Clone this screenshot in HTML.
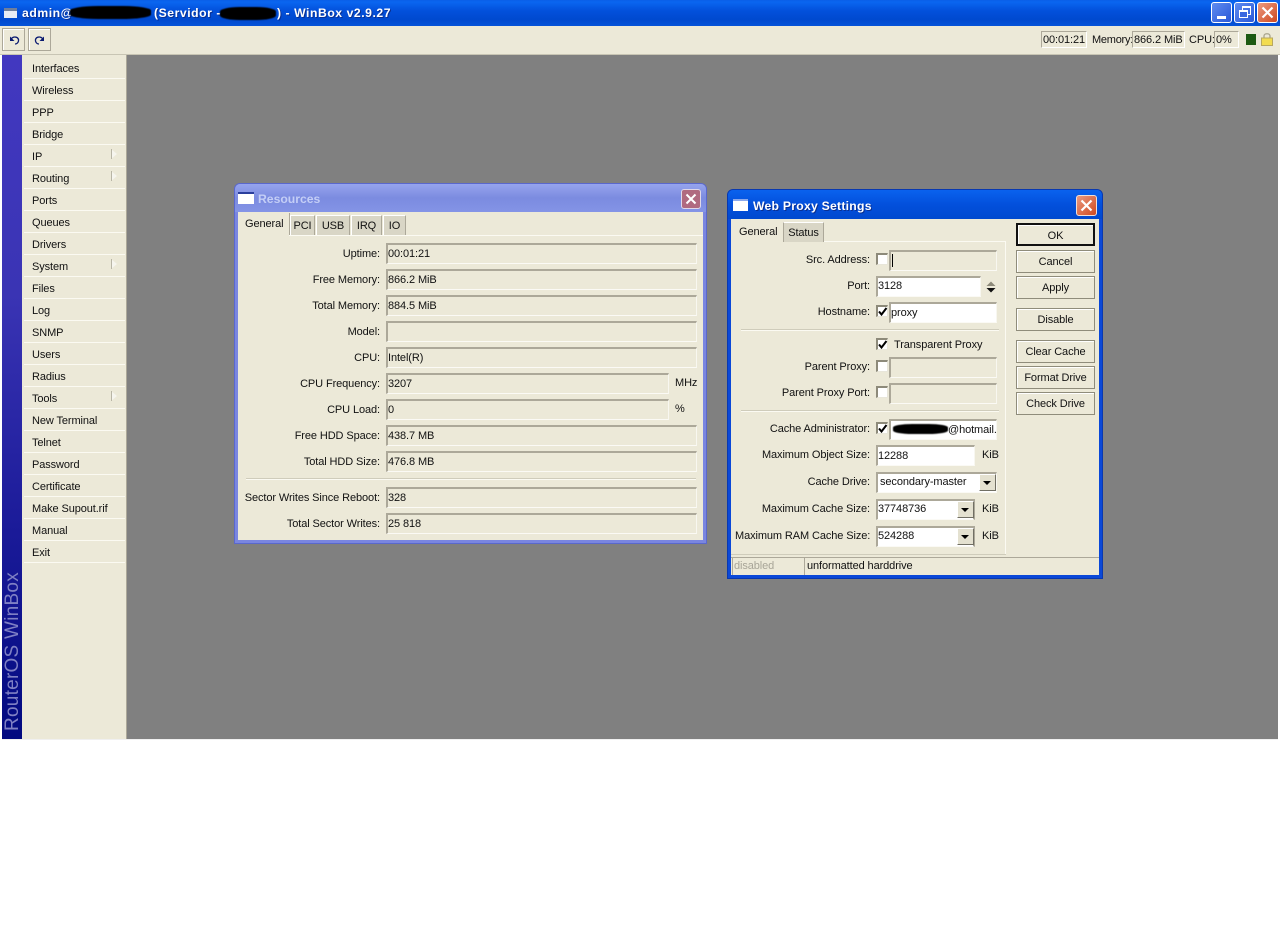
<!DOCTYPE html>
<html><head><meta charset="utf-8"><style>
html,body{margin:0;padding:0;background:#fff;width:1280px;height:929px;overflow:hidden}
*{box-sizing:border-box}
body{position:relative;font-family:"Liberation Sans",sans-serif;font-size:11px;letter-spacing:-.1px;color:#111}
div,span.a{position:absolute}
.t{white-space:nowrap;line-height:14px;height:14px}
.r{text-align:right}
.f{height:21px;border-top:2px solid #aca899;border-left:2px solid #aca899;border-right:1px solid #f8f7f0;border-bottom:1px solid #fbfaf5;background:#ece9d8;padding:2px 0 0 0;line-height:14px;white-space:nowrap;overflow:hidden}
.w{background:#fff}
.m{left:32px;width:90px}
.s{left:24px;width:101px;height:1px;background:#fbfaf2}
.arrow{left:111px;width:0;height:0;border-left:6px solid #f6f5ee;border-top:5px solid transparent;border-bottom:5px solid transparent}
.arrow:before{content:"";position:absolute;left:-6px;top:-5px;width:1px;height:10px;background:#b8b5a6}
.tab{background:#d9d6c6;height:20px;border-right:1px solid #aca899;border-top:1px solid #fff;border-left:1px solid #fff;text-align:center;line-height:20px}
.btn{left:1016px;width:79px;height:23px;border:1px solid #8f8c7b;box-shadow:inset 1px 1px 0 #fff;text-align:center;line-height:22px;background:#ece9d8}
.cb{width:12px;height:12px;background:#fff;border-top:2px solid #8d8a7a;border-left:2px solid #8d8a7a;border-right:1px solid #e8e6da;border-bottom:1px solid #e8e6da}
.dd{width:17px;height:17px;background:#e4e1d0;border-right:1px solid #716f64;border-bottom:1px solid #716f64;border-top:1px solid #fff;border-left:1px solid #fff}
.dd:after{content:"";position:absolute;left:3px;top:6px;border-left:4px solid transparent;border-right:4px solid transparent;border-top:4px solid #000}
.blot{background:#000;border-radius:35%;filter:blur(.6px)}
.tb{height:21px;width:21px;border-radius:3px;border:1px solid #fff}
.h{font-size:12.2px;font-weight:bold;letter-spacing:.45px}
</style></head><body>

<!-- main title bar -->
<div style="left:0;top:0;width:1280px;height:26px;background:linear-gradient(180deg,#0a5fe8 0,#0a66f0 8%,#0351dc 40%,#0049cf 75%,#0553d8 100%)"></div>
<div style="left:4px;top:8px;width:13px;height:10px;background:#e8ecf5;border-top:3px solid #6f7f9c"></div>
<div class="t h" style="left:22px;top:6px;color:#fff;letter-spacing:.55px;text-shadow:1px 1px 0 #0a2f90">admin@</div>
<div class="blot" style="left:70px;top:6px;width:81px;height:13px"></div>
<div class="t h" style="left:154px;top:6px;color:#fff;letter-spacing:.55px;text-shadow:1px 1px 0 #0a2f90">(Servidor -</div>
<div class="blot" style="left:220px;top:7px;width:56px;height:13px"></div>
<div class="t h" style="left:277px;top:6px;color:#fff;letter-spacing:.55px;text-shadow:1px 1px 0 #0a2f90">) - WinBox v2.9.27</div>

<div class="tb" style="left:1211px;top:2px;background:linear-gradient(135deg,#5f8cf0,#2a58d8)"><div style="left:5px;top:13px;width:9px;height:3px;background:#fff"></div></div>
<div class="tb" style="left:1234px;top:2px;background:linear-gradient(135deg,#5f8cf0,#2a58d8)"><div style="left:7px;top:3px;width:9px;height:9px;border:1px solid #fff;border-top-width:2px"></div><div style="left:4px;top:7px;width:9px;height:8px;border:1px solid #fff;border-top-width:2px;background:#3a68e0"></div></div>
<div class="tb" style="left:1257px;top:2px;background:linear-gradient(135deg,#ea9a80,#d04a20)"><svg style="position:absolute;left:3px;top:3px" width="13" height="13"><path d="M1.500 1.500L11.500 11.500M11.500 1.500L1.500 11.500" stroke="#fff" stroke-width="2.200"/></svg></div>

<!-- toolbar -->
<div style="left:0;top:26px;width:1280px;height:28px;background:#ece9d8"></div>
<div style="left:0;top:54px;width:1280px;height:1px;background:#c8c5b4"></div>
<div style="left:2px;top:28px;width:23px;height:23px;border:1px solid #aca899;box-shadow:inset 1px 1px 0 #fff"><svg style="position:absolute;left:4px;top:4px" width="14" height="14"><path d="M3 3.500L3 8L7.500 8Z" fill="#0a1a70"/><path d="M4 6C7 2.500 12 4 11.500 8C11 10 9.500 11 8 11" fill="none" stroke="#0a1a70" stroke-width="1.300"/></svg></div>
<div style="left:28px;top:28px;width:23px;height:23px;border:1px solid #aca899;box-shadow:inset 1px 1px 0 #fff"><svg style="position:absolute;left:4px;top:4px" width="14" height="14"><path d="M11 3.500L11 8L6.500 8Z" fill="#0a1a70"/><path d="M10 6C7 2.500 2 4 2.500 8C3 10 4.500 11 6 11" fill="none" stroke="#0a1a70" stroke-width="1.300"/></svg></div>

<div style="left:1041px;top:31px;width:46px;height:17px;border-top:1px solid #aca899;border-left:1px solid #aca899;border-right:1px solid #fff;border-bottom:1px solid #fff"></div>
<div class="t" style="left:1043px;top:33px">00:01:21</div>
<div class="t" style="left:1092px;top:33px;letter-spacing:-.25px">Memory:</div>
<div style="left:1132px;top:31px;width:53px;height:17px;border-top:1px solid #aca899;border-left:1px solid #aca899;border-right:1px solid #fff;border-bottom:1px solid #fff"></div>
<div class="t" style="left:1134px;top:33px">866.2 MiB</div>
<div class="t" style="left:1189px;top:33px">CPU:</div>
<div style="left:1214px;top:31px;width:25px;height:17px;border-top:1px solid #aca899;border-left:1px solid #aca899;border-right:1px solid #fff;border-bottom:1px solid #fff"></div>
<div class="t" style="left:1216px;top:33px">0%</div>
<div style="left:1246px;top:34px;width:10px;height:11px;background:#1d5a12"></div>
<svg class="a" style="position:absolute;left:1261px;top:32px" width="12" height="14"><path d="M3 6V4C3 1 9 1 9 4V6" fill="none" stroke="#a8a48c" stroke-width="1.300"/><rect x=".5" y="6" width="11" height="7.500" fill="#f2dc50" stroke="#b8a860"/></svg>

<!-- left area -->
<div style="left:0;top:55px;width:2px;height:684px;background:#fff"></div>
<div style="left:2px;top:55px;width:20px;height:684px;background:linear-gradient(180deg,#4238c0 0,#3a34b4 35%,#1a1a98 70%,#020a80 100%)"></div>
<div style="left:22px;top:55px;width:105px;height:684px;background:#ece9d8"></div>
<div style="left:127px;top:55px;width:1151px;height:684px;background:#808080"></div>
<div style="left:126px;top:55px;width:1px;height:684px;background:#aca899"></div>
<div style="left:2px;top:739px;width:1276px;height:1px;background:#f0f0f0"></div>
<div class="t" style="left:-67px;top:641px;width:160px;height:20px;line-height:20px;font-size:19px;color:#7f80c4;transform:rotate(-90deg);letter-spacing:.25px">RouterOS WinBox</div>

<div class="t m" style="top:62px">Interfaces</div><div class="s" style="top:78px"></div>
<div class="t m" style="top:84px">Wireless</div><div class="s" style="top:100px"></div>
<div class="t m" style="top:106px">PPP</div><div class="s" style="top:122px"></div>
<div class="t m" style="top:128px">Bridge</div><div class="s" style="top:144px"></div>
<div class="t m" style="top:150px">IP</div><div class="s" style="top:166px"></div><div class="arrow" style="top:149px"></div>
<div class="t m" style="top:172px">Routing</div><div class="s" style="top:188px"></div><div class="arrow" style="top:171px"></div>
<div class="t m" style="top:194px">Ports</div><div class="s" style="top:210px"></div>
<div class="t m" style="top:216px">Queues</div><div class="s" style="top:232px"></div>
<div class="t m" style="top:238px">Drivers</div><div class="s" style="top:254px"></div>
<div class="t m" style="top:260px">System</div><div class="s" style="top:276px"></div><div class="arrow" style="top:259px"></div>
<div class="t m" style="top:282px">Files</div><div class="s" style="top:298px"></div>
<div class="t m" style="top:304px">Log</div><div class="s" style="top:320px"></div>
<div class="t m" style="top:326px">SNMP</div><div class="s" style="top:342px"></div>
<div class="t m" style="top:348px">Users</div><div class="s" style="top:364px"></div>
<div class="t m" style="top:370px">Radius</div><div class="s" style="top:386px"></div>
<div class="t m" style="top:392px">Tools</div><div class="s" style="top:408px"></div><div class="arrow" style="top:391px"></div>
<div class="t m" style="top:414px">New Terminal</div><div class="s" style="top:430px"></div>
<div class="t m" style="top:436px">Telnet</div><div class="s" style="top:452px"></div>
<div class="t m" style="top:458px">Password</div><div class="s" style="top:474px"></div>
<div class="t m" style="top:480px">Certificate</div><div class="s" style="top:496px"></div>
<div class="t m" style="top:502px">Make Supout.rif</div><div class="s" style="top:518px"></div>
<div class="t m" style="top:524px">Manual</div><div class="s" style="top:540px"></div>
<div class="t m" style="top:546px">Exit</div><div class="s" style="top:562px"></div>

<!-- Resources window -->
<div style="left:234px;top:183px;width:473px;height:361px;background:#7a86e0;border-radius:6px 6px 0 0;border:1px solid #5a68cc"></div>
<div style="left:235px;top:184px;width:471px;height:28px;background:linear-gradient(180deg,#96a4ee 0,#7b8be0 50%,#8494e6 100%);border-radius:5px 5px 0 0"></div>
<div style="left:238px;top:192px;width:16px;height:12px;background:#fff;border-top:2px solid #2a3e9c"></div>
<div class="t h" style="left:258px;top:192px;color:#c4cef6;letter-spacing:0">Resources</div>
<div style="left:681px;top:189px;width:20px;height:20px;border-radius:3px;border:1px solid #e0d8e8;background:#b06a80"><svg style="position:absolute;left:3px;top:3px" width="12" height="12"><path d="M1.500 1.500L10.500 10.500M10.500 1.500L1.500 10.500" stroke="#fff" stroke-width="2"/></svg></div>
<div style="left:238px;top:212px;width:465px;height:328px;background:#ece9d8"></div>
<div style="left:238px;top:235px;width:465px;height:1px;background:#fbfaf2"></div>
<div style="left:238px;top:235px;width:51px;height:1px;background:#ece9d8"></div>
<div style="left:289px;top:213px;width:1px;height:22px;background:#aca899"></div>
<div class="t" style="left:245px;top:217px">General</div>
<div class="tab" style="left:290px;top:215px;width:25px">PCI</div>
<div class="tab" style="left:316px;top:215px;width:34px">USB</div>
<div class="tab" style="left:351px;top:215px;width:31px">IRQ</div>
<div class="tab" style="left:383px;top:215px;width:23px">IO</div>

<div class="t r" style="left:240px;width:140px;top:247px">Uptime:</div><div class="f" style="left:386px;top:243px;width:311px">00:01:21</div>
<div class="t r" style="left:240px;width:140px;top:273px">Free Memory:</div><div class="f" style="left:386px;top:269px;width:311px">866.2 MiB</div>
<div class="t r" style="left:240px;width:140px;top:299px">Total Memory:</div><div class="f" style="left:386px;top:295px;width:311px">884.5 MiB</div>
<div class="t r" style="left:240px;width:140px;top:325px">Model:</div><div class="f" style="left:386px;top:321px;width:311px"></div>
<div class="t r" style="left:240px;width:140px;top:351px">CPU:</div><div class="f" style="left:386px;top:347px;width:311px">Intel(R)</div>
<div class="t r" style="left:240px;width:140px;top:377px">CPU Frequency:</div><div class="f" style="left:386px;top:373px;width:283px">3207</div><div class="t" style="left:675px;top:376px">MHz</div>
<div class="t r" style="left:240px;width:140px;top:403px">CPU Load:</div><div class="f" style="left:386px;top:399px;width:283px">0</div><div class="t" style="left:675px;top:402px">%</div>
<div class="t r" style="left:240px;width:140px;top:429px">Free HDD Space:</div><div class="f" style="left:386px;top:425px;width:311px">438.7 MB</div>
<div class="t r" style="left:240px;width:140px;top:455px">Total HDD Size:</div><div class="f" style="left:386px;top:451px;width:311px">476.8 MB</div>
<div style="left:246px;top:478px;width:450px;height:1px;background:#cfccbb"></div>
<div style="left:246px;top:479px;width:450px;height:1px;background:#fbfaf2"></div>
<div class="t r" style="left:240px;width:140px;top:491px">Sector Writes Since Reboot:</div><div class="f" style="left:386px;top:487px;width:311px">328</div>
<div class="t r" style="left:240px;width:140px;top:517px">Total Sector Writes:</div><div class="f" style="left:386px;top:513px;width:311px">25 818</div>

<!-- Web Proxy window -->
<div style="left:727px;top:189px;width:376px;height:390px;background:#0a48d8;border-radius:6px 6px 0 0;border:1px solid #0838b0"></div>
<div style="left:728px;top:190px;width:374px;height:29px;background:linear-gradient(180deg,#0a62ee 0,#0350dc 50%,#0049cf 100%);border-radius:5px 5px 0 0"></div>
<div style="left:733px;top:199px;width:15px;height:12px;background:#fff;border-top:2px solid #8aa8ec"></div>
<div class="t h" style="left:753px;top:199px;color:#fff;letter-spacing:.25px;text-shadow:1px 1px 0 #0a2f90">Web Proxy Settings</div>
<div style="left:1076px;top:195px;width:21px;height:21px;border-radius:3px;border:1px solid #f0e0d8;background:linear-gradient(135deg,#ea9a80,#d04a20)"><svg style="position:absolute;left:3px;top:3px" width="13" height="13"><path d="M1.500 1.500L11.500 11.500M11.500 1.500L1.500 11.500" stroke="#fff" stroke-width="2.200"/></svg></div>
<div style="left:731px;top:219px;width:368px;height:356px;background:#ece9d8"></div>
<div style="left:731px;top:241px;width:275px;height:1px;background:#fbfaf2"></div>
<div style="left:731px;top:241px;width:52px;height:1px;background:#ece9d8"></div>
<div style="left:1005px;top:241px;width:1px;height:313px;background:#fbfaf2"></div>
<div style="left:731px;top:554px;width:275px;height:1px;background:#cfccbb"></div>
<div class="t" style="left:739px;top:225px">General</div>
<div style="left:783px;top:222px;width:41px;height:20px;background:#d9d6c6;border-top:1px solid #fff;border-left:1px solid #aca899;border-right:1px solid #aca899;text-align:center;line-height:20px">Status</div>

<div class="t r" style="left:735px;width:135px;top:253px">Src. Address:</div><div class="cb" style="left:876px;top:253px"></div><div class="f" style="left:889px;top:250px;width:108px"><span style="display:inline-block;width:1px;height:13px;background:#000;margin-left:1px"></span></div>
<div class="t r" style="left:735px;width:135px;top:279px">Port:</div><div class="f w" style="left:876px;top:276px;width:105px;padding-top:1px">3128</div>
<svg style="position:absolute;left:985px;top:280px" width="12" height="14"><path d="M1.500 6L6 1.500L10.500 6Z" fill="#8d8a7a"/><path d="M1.500 8H10.500L6 12.500Z" fill="#111"/></svg>
<div class="t r" style="left:735px;width:135px;top:305px">Hostname:</div><div class="cb" style="left:876px;top:305px"><svg style="position:absolute;left:0;top:0" width="10" height="10"><path d="M1 4.500L3.500 7.500L8.500 1" fill="none" stroke="#000" stroke-width="2"/></svg></div><div class="f w" style="left:889px;top:302px;width:108px">proxy</div>
<div style="left:741px;top:329px;width:258px;height:1px;background:#cfccbb"></div>
<div style="left:741px;top:330px;width:258px;height:1px;background:#fbfaf2"></div>
<div class="cb" style="left:876px;top:338px"><svg style="position:absolute;left:0;top:0" width="10" height="10"><path d="M1 4.500L3.500 7.500L8.500 1" fill="none" stroke="#000" stroke-width="2"/></svg></div><div class="t" style="left:894px;top:338px">Transparent Proxy</div>
<div class="t r" style="left:735px;width:135px;top:360px">Parent Proxy:</div><div class="cb" style="left:876px;top:360px"></div><div class="f" style="left:889px;top:357px;width:108px"></div>
<div class="t r" style="left:735px;width:135px;top:386px">Parent Proxy Port:</div><div class="cb" style="left:876px;top:386px"></div><div class="f" style="left:889px;top:383px;width:108px"></div>
<div style="left:741px;top:410px;width:258px;height:1px;background:#cfccbb"></div>
<div style="left:741px;top:411px;width:258px;height:1px;background:#fbfaf2"></div>
<div class="t r" style="left:735px;width:135px;top:422px">Cache Administrator:</div><div class="cb" style="left:876px;top:422px"><svg style="position:absolute;left:0;top:0" width="10" height="10"><path d="M1 4.500L3.500 7.500L8.500 1" fill="none" stroke="#000" stroke-width="2"/></svg></div><div class="f w" style="left:889px;top:419px;width:108px;padding-left:57px">@hotmail.</div>
<div class="blot" style="left:893px;top:424px;width:55px;height:10px"></div>
<div class="t r" style="left:735px;width:135px;top:448px">Maximum Object Size:</div><div class="f w" style="left:876px;top:445px;width:99px">12288</div><div class="t" style="left:982px;top:448px">KiB</div>
<div class="t r" style="left:735px;width:135px;top:475px">Cache Drive:</div><div class="f w" style="left:876px;top:472px;width:121px;padding:1px 0 0 2px">secondary-master</div><div class="dd" style="left:979px;top:474px"></div>
<div class="t r" style="left:735px;width:135px;top:502px">Maximum Cache Size:</div><div class="f w" style="left:876px;top:499px;width:99px;border-right:2px solid #aca899;padding-top:1px">37748736</div><div class="dd" style="left:957px;top:501px"></div><div class="t" style="left:982px;top:502px">KiB</div>
<div class="t r" style="left:735px;width:135px;top:529px">Maximum RAM Cache Size:</div><div class="f w" style="left:876px;top:526px;width:99px;border-right:2px solid #aca899;padding-top:1px">524288</div><div class="dd" style="left:957px;top:528px"></div><div class="t" style="left:982px;top:529px">KiB</div>

<div class="btn" style="top:223px;border:2px solid #111;line-height:22px">OK</div>
<div class="btn" style="top:250px;padding-top:1px;line-height:21px">Cancel</div>
<div class="btn" style="top:276px;padding-top:1px;line-height:21px">Apply</div>
<div class="btn" style="top:308px;padding-top:1px;line-height:21px">Disable</div>
<div class="btn" style="top:340px;padding-top:1px;line-height:21px">Clear Cache</div>
<div class="btn" style="top:366px;padding-top:1px;line-height:21px">Format Drive</div>
<div class="btn" style="top:392px;padding-top:1px;line-height:21px">Check Drive</div>

<div style="left:731px;top:557px;width:368px;height:1px;background:#aca899"></div>
<div style="left:732px;top:558px;width:1px;height:17px;background:#aca899"></div>
<div style="left:804px;top:558px;width:1px;height:17px;background:#aca899"></div>
<div class="t" style="left:734px;top:559px;color:#a8a598">disabled</div>
<div class="t" style="left:807px;top:559px">unformatted harddrive</div>

</body></html>
